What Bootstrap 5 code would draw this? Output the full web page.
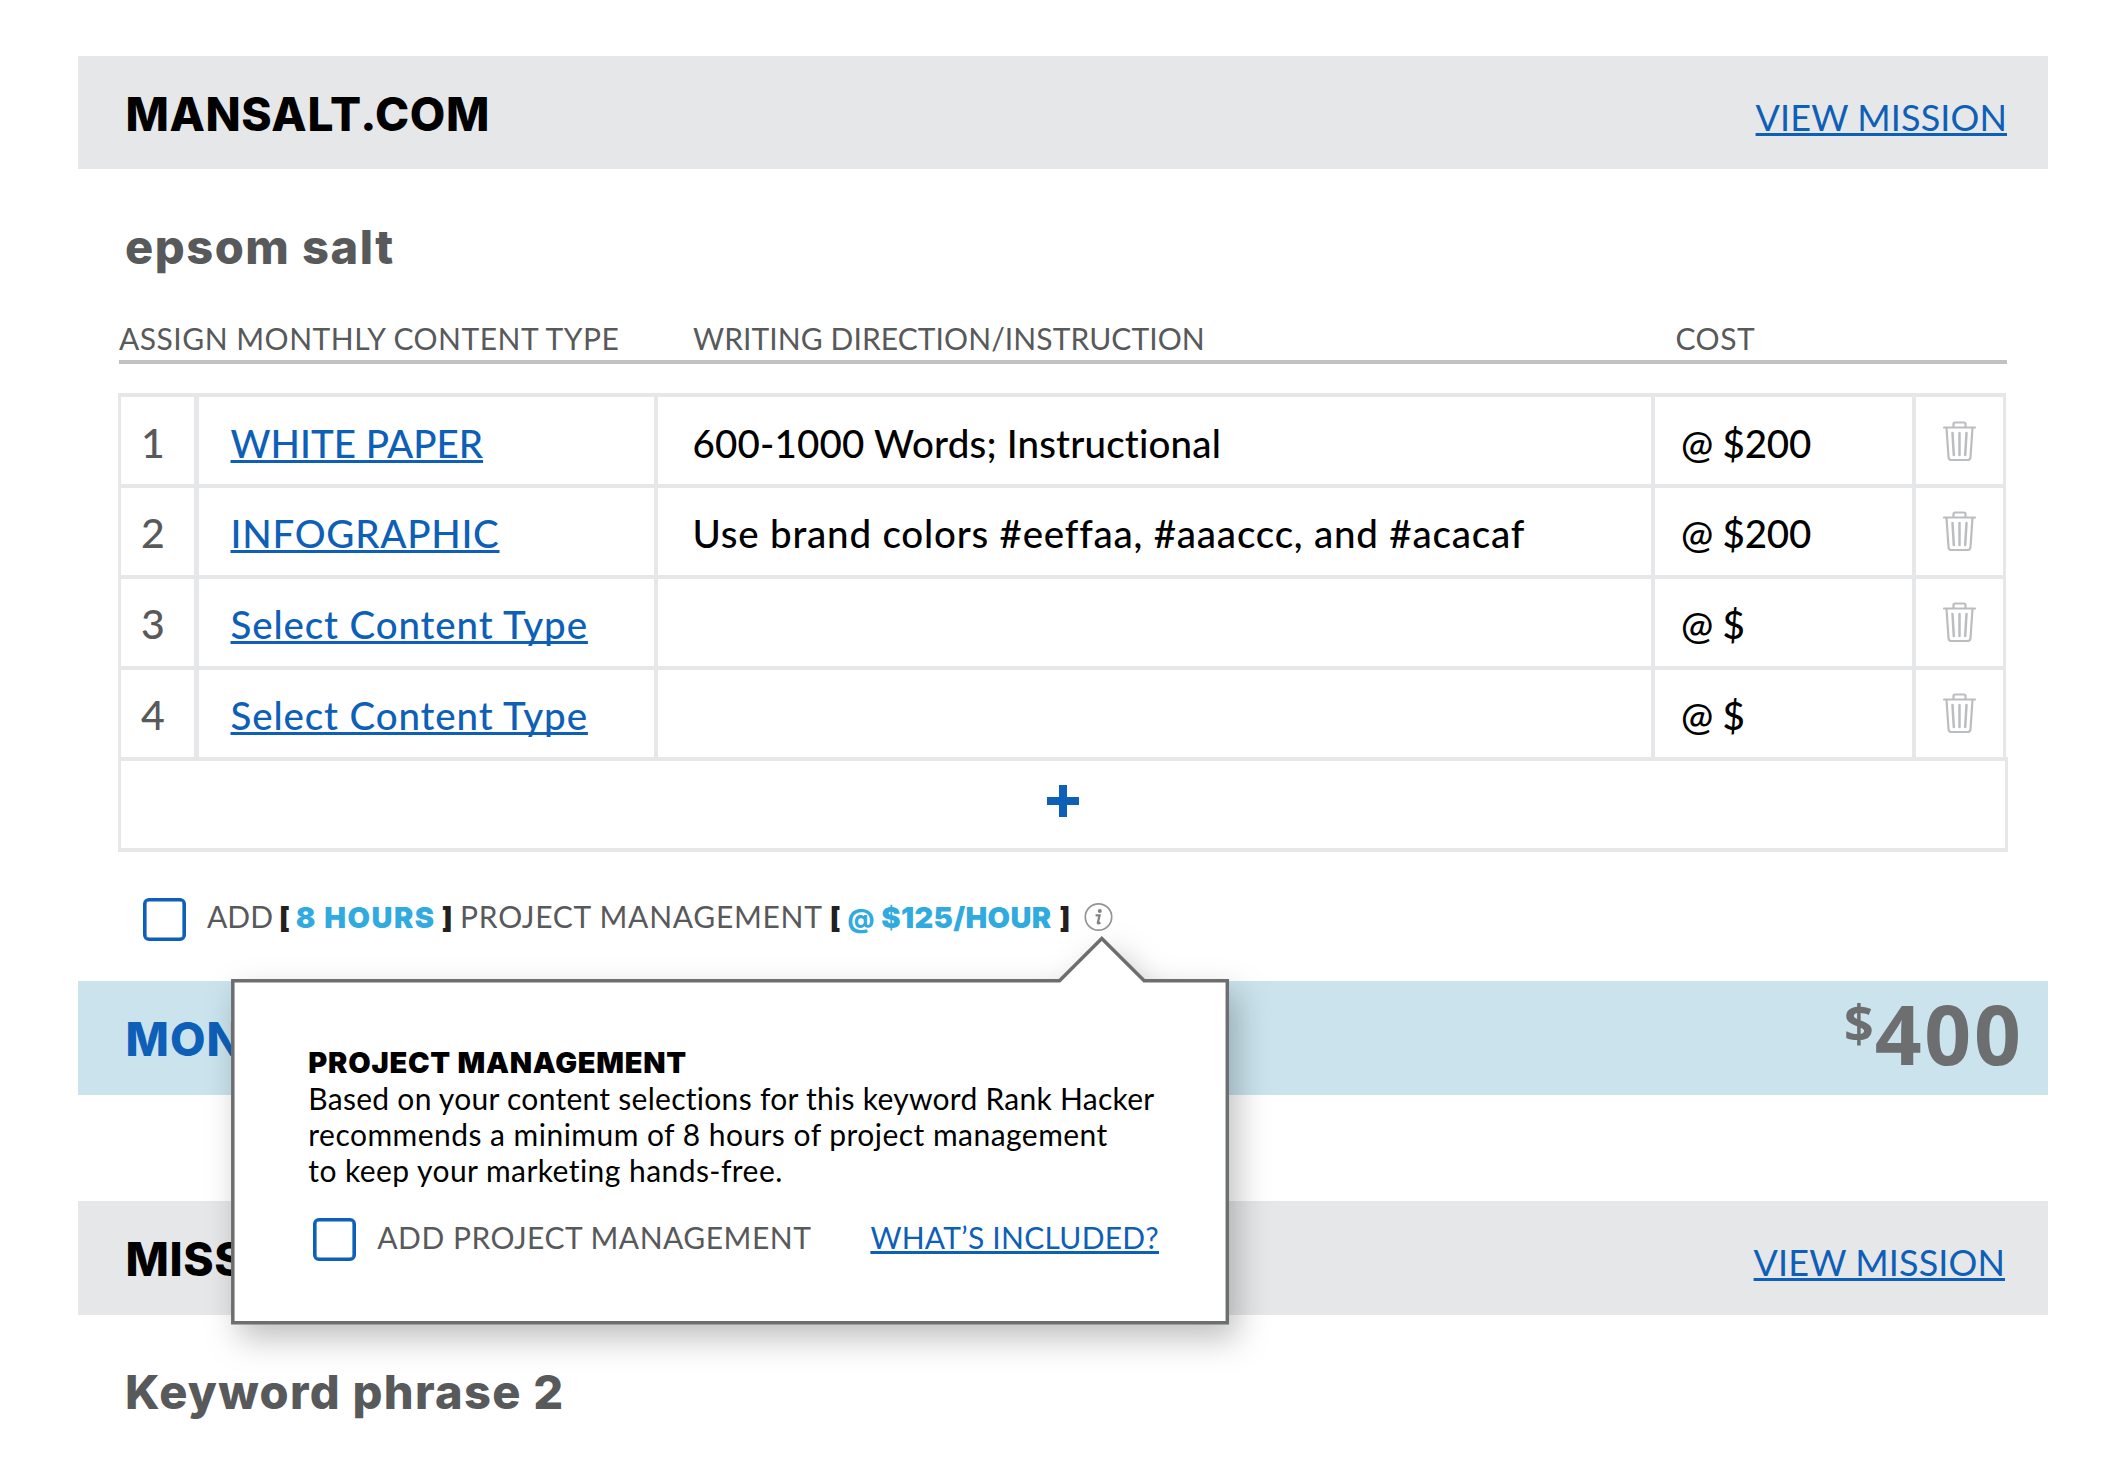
<!DOCTYPE html>
<html lang="en">
<head>
<meta charset="utf-8">
<title>Missions</title>
<meta name="viewport" content="width=device-width, initial-scale=1">
<link href="https://cdn.jsdelivr.net/npm/bootstrap@5.3.0/dist/css/bootstrap.min.css" rel="stylesheet">
<style>
  body { font-family: Lato, sans-serif; font-size: 30px; line-height: 40px; color: #58595b; background: #fff; font-variant-ligatures: none; }
  .page { width: 2124px; height: 1470px; padding: 56px 76px 0 78px; }
  a { color: #0e5fb7; text-decoration-thickness: 3px; text-underline-offset: 2px; text-decoration-skip-ink: none; white-space: nowrap; }
  .heavy { font-family: Inter, sans-serif; font-weight: 800; }

  .mission-bar { height: 114px; padding: 28px 41px 0 47.5px; background: #e6e7e8; }
  .mission-bar.first-bar { height: 113px; }
  .mission-bar h1, .total-bar h2 { margin: 0; font-size: 46px; line-height: 60px; letter-spacing: .62px; color: #000; }
  .mission-bar a { margin-top: 2.5px; font-size: 36px; line-height: 60px; letter-spacing: .1px; }
  .keyword { margin: 0 0 0 47px; font: 800 47px/60px Inter, sans-serif; color: #58595b; }
  .keyword.k1 { margin-top: 48px; letter-spacing: 1.5px; }
  .keyword.k2 { margin-top: 47px; letter-spacing: 1.3px; }

  .total-bar { height: 114px; padding: 0 24.5px 0 47.5px; background: #cae3ec; }
  .total-bar h2 { padding-top: 28px; letter-spacing: 1px; color: #0e5fb7; }
  .total { font: 700 82px/80px "Open Sans", sans-serif; color: #6d6e70; }
  .total .amount { margin-top: 12px; letter-spacing: 2.7px; }
  .total .unit { margin: 1.5px 1px 0 0; font-size: 52px; }

  .sheet { margin: 0 41px 0 40px; }
  .heads { margin-left: 1px; padding-top: 41px; height: 87px; border-bottom: 4px solid #bfc1c3; white-space: nowrap; }
  .heads .h-type { width: 574px; letter-spacing: .5px; }
  .heads .h-desc { width: 982.5px; letter-spacing: .08px; }
  .heads .h-cost { letter-spacing: .5px; }

  .items { margin-top: 29px; font-size: 38.5px; line-height: 60px; font-weight: 500; color: #000; }
  .item { width: 1888px; height: 91px; }
  .item > div { border: 0 solid #e6e7e8; border-top-width: 4px; padding-top: 15px; white-space: nowrap; }
  .item:first-child > div { padding-top: 16px; }
  .item > .c-num { width: 76px; border-left-width: 3px; padding-left: 20px; font-size: 41px; color: #58595b; }
  .item > .c-type { width: 460px; border-left-width: 5px; padding-left: 31.5px; }
  .item > .c-desc { width: 997px; border-left-width: 4px; padding-left: 34.5px; }
  .item > .c-cost { width: 261px; border-left-width: 4px; padding-left: 26px; letter-spacing: -.2px; }
  .item > .c-del { width: 94px; border-left-width: 4px; border-right-width: 3px; padding: 23px 0 0 27px; }
  .item:first-child > .c-del { padding-top: 24px; }
  .c-del svg { display: block; }
  .add-row { width: 1890px; height: 95px; border: 3px solid #e6e7e8; border-width: 4px 3px; padding-top: 23px; }

  .form-check-input.box { flex: none; width: 43px; height: 43px; margin: 0; border: 3px solid #0e5fb7; border-radius: 6px; box-shadow: inset 0 0 0 .6px #0e5fb7; background: #fff; }
  .pm { height: 129px; padding: 46px 0 0 24.5px; }
  .pm .words { margin: -2.2px 0 0 21.5px; white-space: nowrap; }
  .pm .heavy { font-size: 29px; font-weight: 900; }
  .pm .brk { font-size: 28px; color: #231f20; }
  .pm .val { color: #30aadf; }

  .tip { left: 190px; top: 900px; width: 1120px; height: 520px; pointer-events: none; }
  .tip > svg { position: absolute; left: 0; top: 0; filter: drop-shadow(8px 14px 16px rgba(0,0,0,.25)); }
  .tip-body { position: relative; padding: 144.6px 0 0 118.3px; color: #000; }
  .tip-body h3 { margin: 0 0 -.8px; font-size: 29px; font-weight: 900; line-height: 36px; letter-spacing: .74px; }
  .tip-body p { margin: 0; line-height: 36px; white-space: nowrap; }
  .tip-add { margin: 30px 0 0 4.5px; color: #58595b; white-space: nowrap; }
</style>
</head>
<body>
<svg class="d-none">
  <symbol id="trash" viewBox="0 0 33 40">
    <g fill="none" stroke="#bbbdbf" stroke-width="2.200" stroke-linecap="round" stroke-linejoin="round">
      <path d="M1 6.500h31M10.500 6V3Q10.500 1.500 12 1.500H21Q22.500 1.500 22.500 3V6"/>
      <path d="M3.500 7l2 29Q5.700 39 8.500 39H24.500Q27.300 39 27.500 36l2-29"/>
      <path d="M9.500 12l1.300 22M16.500 12v22M23.500 12l-1.300 22" stroke-width="2.500"/>
    </g>
  </symbol>
</svg>
<main class="page position-relative overflow-hidden">

  <header class="mission-bar first-bar d-flex justify-content-between align-items-start">
    <h1 class="heavy">MANSALT.COM</h1>
    <a href="#">VIEW MISSION</a>
  </header>

  <h2 class="keyword k1">epsom salt</h2>

  <section class="sheet">
    <div class="heads d-flex">
      <div class="h-type">ASSIGN MONTHLY CONTENT TYPE</div>
      <div class="h-desc">WRITING DIRECTION/INSTRUCTION</div>
      <div class="h-cost">COST</div>
    </div>

    <div class="items">
      <div class="item d-flex">
        <div class="c-num">1</div>
        <div class="c-type"><a href="#">WHITE PAPER</a></div>
        <div class="c-desc" style="letter-spacing:.18px">600-1000 Words; Instructional</div>
        <div class="c-cost">@ $200</div>
        <div class="c-del"><svg width="33" height="40"><use href="#trash"/></svg></div>
      </div>
      <div class="item d-flex">
        <div class="c-num">2</div>
        <div class="c-type"><a href="#" style="letter-spacing:.75px">INFOGRAPHIC</a></div>
        <div class="c-desc" style="letter-spacing:.8px">Use brand colors #eeffaa, #aaaccc, and #acacaf</div>
        <div class="c-cost">@ $200</div>
        <div class="c-del"><svg width="33" height="40"><use href="#trash"/></svg></div>
      </div>
      <div class="item d-flex">
        <div class="c-num">3</div>
        <div class="c-type"><a href="#" style="letter-spacing:.87px">Select Content Type</a></div>
        <div class="c-desc"></div>
        <div class="c-cost">@ $</div>
        <div class="c-del"><svg width="33" height="40"><use href="#trash"/></svg></div>
      </div>
      <div class="item d-flex">
        <div class="c-num">4</div>
        <div class="c-type"><a href="#" style="letter-spacing:.87px">Select Content Type</a></div>
        <div class="c-desc"></div>
        <div class="c-cost">@ $</div>
        <div class="c-del"><svg width="33" height="40"><use href="#trash"/></svg></div>
      </div>
      <div class="add-row d-flex justify-content-center align-items-start">
        <svg width="32" height="33" viewBox="0 0 32 33"><path d="M12 1h8v12h12v8H20v12h-8V21H0v-8h12z" fill="#0e5fb7"/></svg>
      </div>
    </div>

    <div class="pm d-flex align-items-start">
      <input class="form-check-input box" type="checkbox" aria-label="Add project management">
      <div class="words d-flex align-items-baseline">
        <span>ADD</span>
        <span class="heavy brk" style="margin-left:6px">[</span>
        <span class="heavy val" style="margin-left:6px;letter-spacing:1.500px">8 HOURS</span>
        <span class="heavy brk" style="margin-left:6px">]</span>
        <span style="margin-left:7.600px;letter-spacing:.73px">PROJECT MANAGEMENT</span>
        <span class="heavy brk" style="margin-left:7px">[</span>
        <span class="heavy val" style="margin-left:7px;font-size:26px;font-weight:800">@</span>
        <span class="heavy val" style="margin-left:6.800px;letter-spacing:.35px">$125/HOUR</span>
        <span class="heavy brk" style="margin-left:8px">]</span>
      </div>
      <svg style="margin:4px 0 0 14px" width="29" height="30" viewBox="0 0 29 30">
        <circle cx="14.500" cy="15" r="13.200" fill="none" stroke="#939598" stroke-width="1.700"/>
        <circle cx="15.800" cy="9" r="2" fill="#808285"/>
        <path d="M11.600 13.400h4L13.800 20.800q-.2 1.200 2.600-.3" fill="none" stroke="#808285" stroke-width="2.200"/>
      </svg>
    </div>
  </section>

  <section class="total-bar d-flex justify-content-between align-items-start">
    <h2 class="heavy">MON</h2>
    <div class="total d-flex align-items-start"><span class="unit">$</span><span class="amount">400</span></div>
  </section>

  <header class="mission-bar d-flex justify-content-between align-items-start" style="margin-top:106px;padding-right:43px">
    <h1 class="heavy">MISS</h1>
    <a href="#">VIEW MISSION</a>
  </header>

  <h2 class="keyword k2">Keyword phrase 2</h2>

  <aside class="tip position-absolute">
    <svg width="1120" height="520" viewBox="190 900 1120 520">
      <path d="M232.800 980.800H1059.500L1101.800 938.500L1144.200 980.800H1227.300V1322.800H232.800Z" fill="#fff" stroke="#6d6e70" stroke-width="3.500"/>
    </svg>
    <div class="tip-body">
      <h3 class="heavy">PROJECT MANAGEMENT</h3>
      <p style="letter-spacing:.28px">Based on your content selections for this keyword Rank Hacker</p>
      <p style="letter-spacing:.47px">recommends a minimum of 8 hours of project management</p>
      <p style="letter-spacing:.44px">to keep your marketing hands-free.</p>
      <div class="tip-add d-flex align-items-start">
        <input class="form-check-input box" type="checkbox" aria-label="Add project management">
        <span style="margin:-.6px 0 0 21.500px;letter-spacing:.5px">ADD PROJECT MANAGEMENT</span>
        <a href="#" style="margin:-.6px 0 0 59px;letter-spacing:.25px">WHAT’S INCLUDED?</a>
      </div>
    </div>
  </aside>
</main>
<script src="https://cdn.jsdelivr.net/npm/bootstrap@5.3.0/dist/js/bootstrap.bundle.min.js"></script>
</body>
</html>
